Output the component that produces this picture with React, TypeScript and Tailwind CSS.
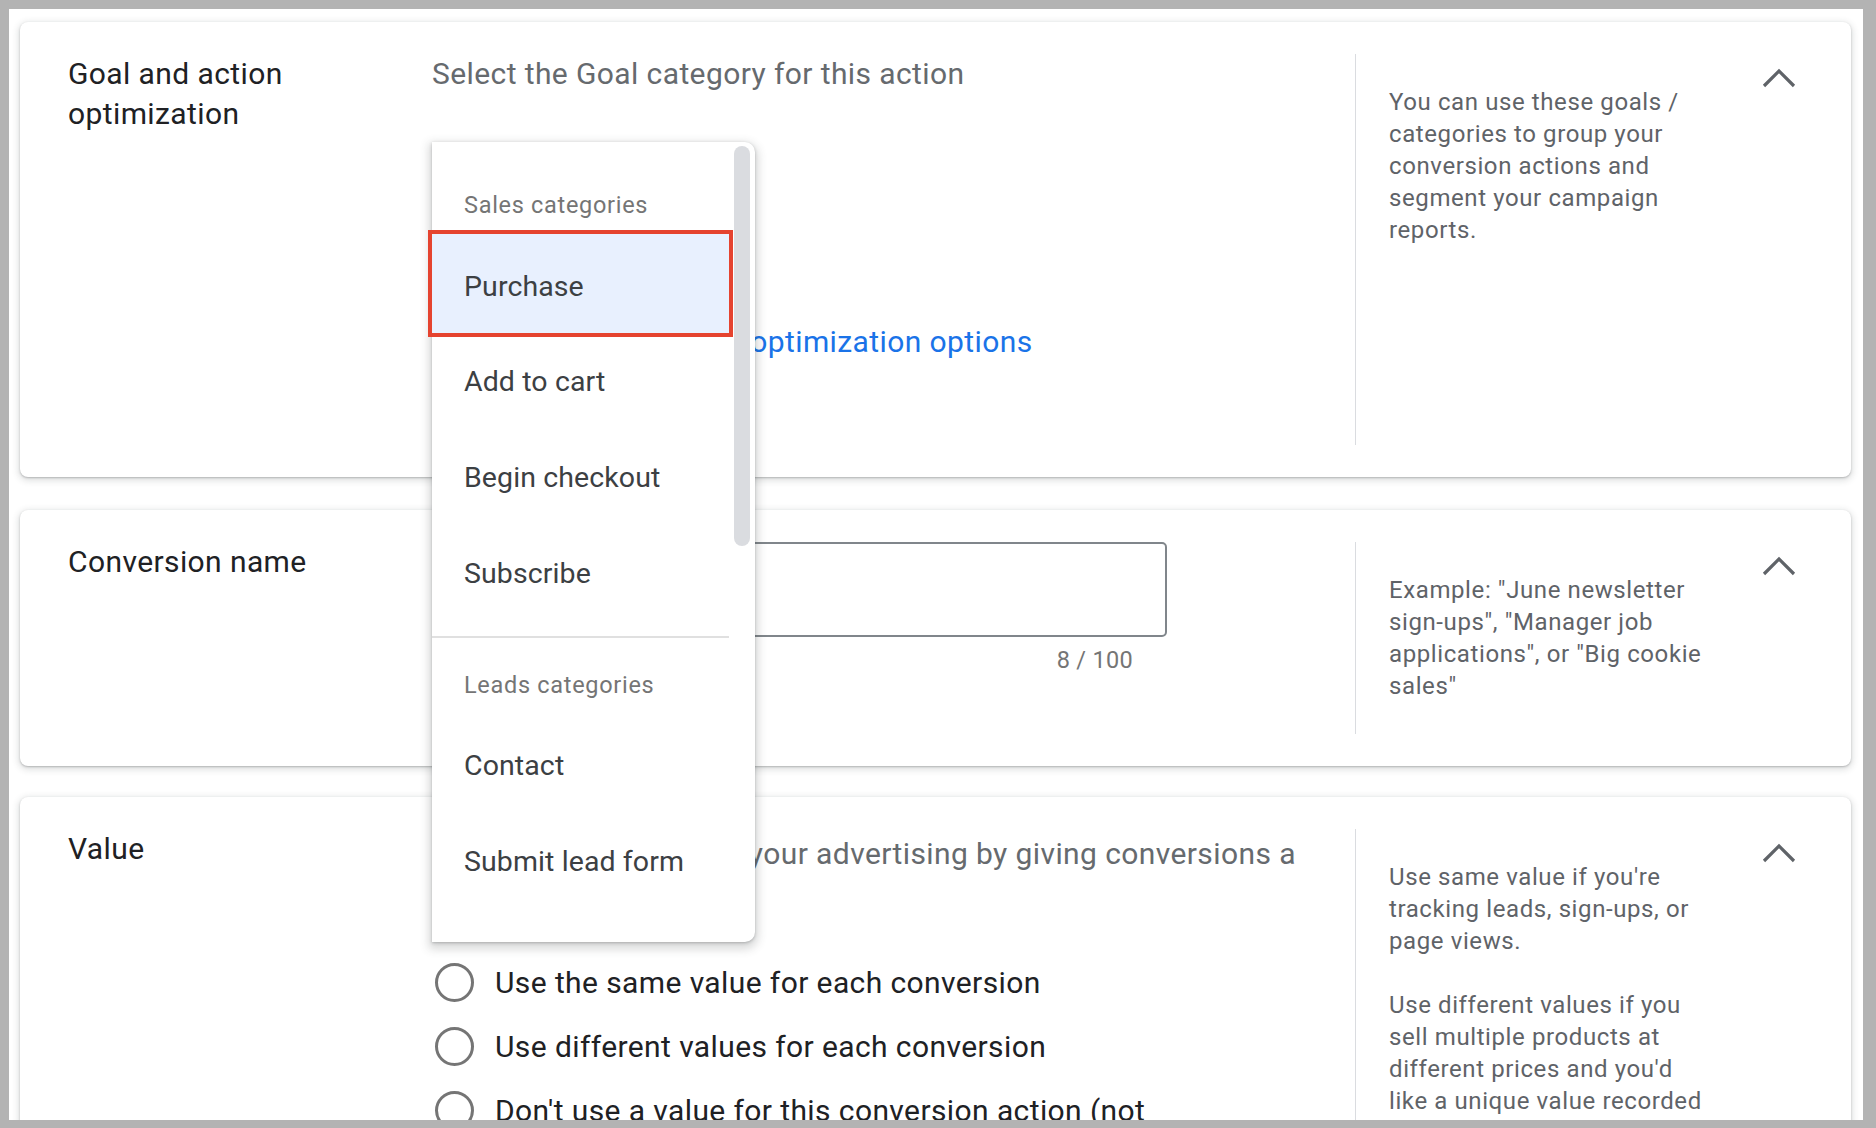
import React from 'react';

function Chevron() {
  return (
    <svg width="34" height="20" viewBox="0 0 34 20" fill="none" className="block">
      <polyline points="2,18 17,3 32,18" stroke="#5f6368" strokeWidth="3.2" />
    </svg>
  );
}

function Card({
  title,
  help,
  children,
  className,
}: {
  title: string;
  help: React.ReactNode;
  children: React.ReactNode;
  className: string;
}) {
  return (
    <section
      className={
        'flex rounded-lg bg-white py-8 pl-12 pr-[55px] shadow-[0_1px_2px_0_rgba(60,64,67,0.3),0_2px_6px_2px_rgba(60,64,67,0.15)] ' +
        className
      }
    >
      <div className="w-[364px] shrink-0 pr-8 text-[30px] leading-[40px] tracking-[0.4px] text-[#202124]">{title}</div>
      <div className="min-w-0 flex-1 pr-12">{children}</div>
      <div className="w-px shrink-0 bg-[#dadce0]" />
      <div className="w-[373px] shrink-0 pl-[33px] pr-[24px] pt-8 text-[24px] leading-[32px] tracking-[0.6px] text-[#5f6368]">
        {help}
      </div>
      <div className="w-[67px] shrink-0 pl-[33px] pt-[14px]">
        <Chevron />
      </div>
    </section>
  );
}

function Radio({ label }: { label: string }) {
  return (
    <label className="flex min-h-16 items-start py-3">
      <span className="ml-[3px] box-border h-[39px] w-[39px] shrink-0 rounded-full border-[3.5px] border-[#757575]" />
      <span className="ml-[21px] text-[30px] leading-[40px] tracking-[0.4px] text-[#202124]">{label}</span>
    </label>
  );
}

function Dropdown() {
  const item = 'flex h-24 items-center pl-8 text-[28.5px] tracking-[0.1px] text-[#3c4043]';
  const header = 'flex h-16 items-center pl-8 text-[23.5px] tracking-[0.7px] text-[#757575]';
  return (
    <div className="absolute left-[432px] top-[142px] h-[800px] w-[323px] rounded-r-[10px] bg-white pt-8 shadow-[0_4px_10px_3px_rgba(60,64,67,0.2),0_1px_3px_0_rgba(60,64,67,0.3)]">
      <div className="w-[297px]">
        <div className={header}>Sales categories</div>
        <div className="-mt-1 flex h-[100px] items-center bg-[#e8f0fe] pl-8 pt-[6px] text-[28.5px] tracking-[0.1px] text-[#3c4043]">
          Purchase
        </div>
        <div className={item}>Add to cart</div>
        <div className={item}>Begin checkout</div>
        <div className={item}>Subscribe</div>
        <div className="mt-[14px] h-[2px] bg-[#e0e0e0]" />
        <div className={'mt-4 ' + header}>Leads categories</div>
        <div className={item}>Contact</div>
        <div className={item}>Submit lead form</div>
      </div>
      <div className="absolute right-[5px] top-1 h-[400px] w-4 rounded-full bg-[#dadce0]" />
      <div className="absolute left-[-4px] top-[88px] h-[107px] w-[305px] border-4 border-[#e5432f]" />
    </div>
  );
}

export default function App() {
  return (
    <div className="relative h-[1128px] w-[1876px] overflow-hidden bg-[#b3b3b3] pb-2 pl-[9px] pr-[13px] pt-[9px] font-['Roboto',sans-serif]">
      <div className="h-full overflow-hidden bg-white pl-[11px] pr-[12px] pt-[13px]">
        <Card
          title="Goal and action optimization"
          className="h-[455px]"
          help="You can use these goals / categories to group your conversion actions and segment your campaign reports."
        >
          <p className="text-[30px] leading-[40px] tracking-[0.4px] text-[#666a6e]">Select the Goal category for this action</p>
          <div className="mt-[56px] flex h-24 w-[300px] items-center border-b-2 border-[#80868b] pl-4 text-[28px] text-[#202124]">
            Purchase
          </div>
          <button className="mt-[76px] text-[30px] leading-[40px] tracking-[0.4px] text-[#1a73e8]">
            Show goals and action optimization options
          </button>
        </Card>

        <Card
          title="Conversion name"
          className="mt-[33px] h-[256px]"
          help={'Example: "June newsletter sign-ups", "Manager job applications", or "Big cookie sales"'}
        >
          <div className="w-[735px]">
            <div className="flex h-[95px] items-center rounded-[5px] border-2 border-[#80868b] px-8 text-[30px] text-[#202124]">
              Purchase
            </div>
            <div className="mt-[7px] pr-[34px] text-right text-[23.5px] leading-[32px] tracking-[0.3px] text-[#757575]">
              8 / 100
            </div>
          </div>
        </Card>

        <Card
          title="Value"
          className="mt-[31px] h-[400px]"
          help={
            <>
              <p>Use same value if you're tracking leads, sign-ups, or page views.</p>
              <p className="mt-8">
                Use different values if you sell multiple products at different prices and you'd like a unique value recorded
              </p>
            </>
          }
        >
          <p className="mt-[5px] text-[30px] leading-[40px] tracking-[0.4px] text-[#666a6e]">
            Measure the impact of your advertising by giving conversions a value.
          </p>
          <div className="mt-[37px]">
            <Radio label="Use the same value for each conversion" />
            <Radio label="Use different values for each conversion" />
            <Radio label="Don't use a value for this conversion action (not recommended)" />
          </div>
        </Card>
      </div>
      <Dropdown />
    </div>
  );
}
